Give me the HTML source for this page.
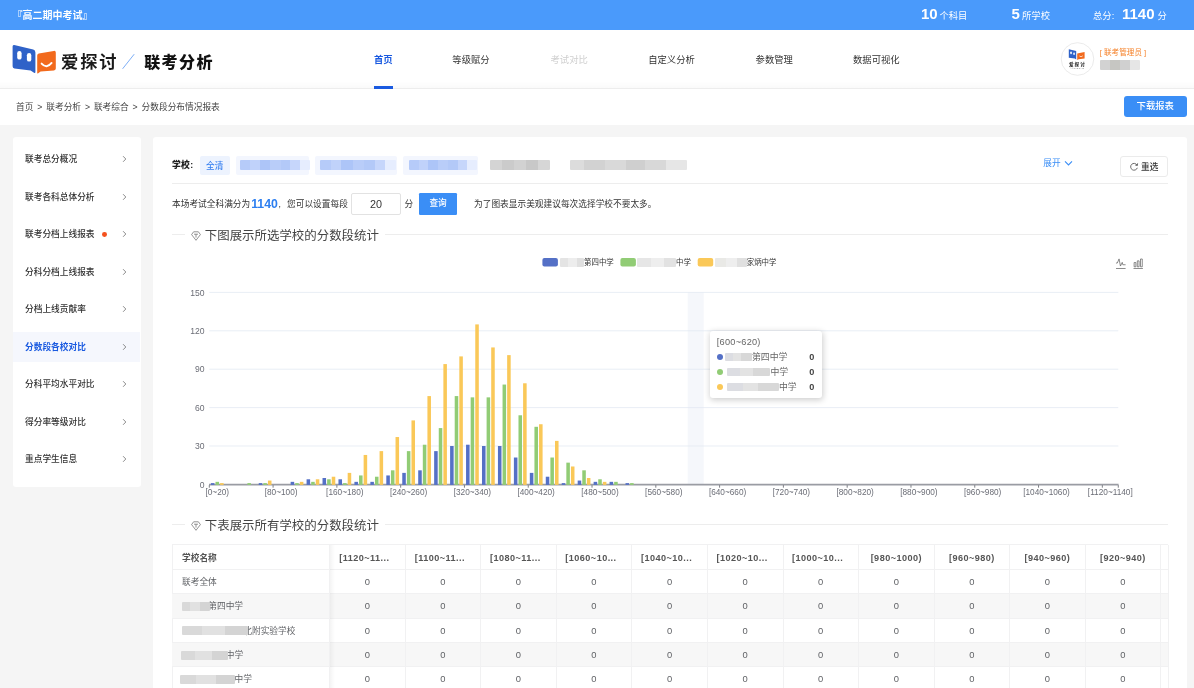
<!DOCTYPE html>
<html lang="zh-CN"><head><meta charset="utf-8"><title>联考分析 - 分数段分布情况报表</title>
<style>
*{box-sizing:border-box;margin:0;padding:0}
html,body{width:1194px;height:688px;overflow:hidden;background:#f5f5f5}
body{position:relative;font-family:"Liberation Sans","Noto Sans CJK SC",sans-serif;font-size:8.7px;color:#333;-webkit-font-smoothing:antialiased}
#root{position:absolute;left:0;top:0;width:1194px;height:688px;overflow:hidden;will-change:transform}
.a{position:absolute;white-space:nowrap}
.topbar{left:0;top:0;width:1194px;height:30px;background:#4a9afb;color:#fff}
.header{left:0;top:30px;width:1194px;height:58.6px;background:#fff;border-bottom:1px solid #ededed}
.crumb{left:0;top:88.5px;width:1194px;height:36.5px;background:#fff}
.card{background:#fff;border-radius:3px}
.nav{font-size:9.33px;line-height:14px;top:52.5px;color:#333}
.mi{left:13px;width:127px;height:30.4px;line-height:30.4px;font-size:8.7px;color:#333;font-weight:500;padding-left:12px}
.mi svg{position:absolute;left:109px;top:11.2px}
.blur{position:absolute;border-radius:1px}
.hl{height:1px;background:#ededed}
.sec{font-size:12.44px;line-height:18px;color:#444}
.yl{font-size:8.6px;line-height:10px;color:#6b6d76;text-align:right;width:30px;left:174.5px}
.xl{font-size:8.25px;line-height:10px;color:#6b6d76;text-align:center;width:60px;top:487.6px}
.th{font-size:9.1px;letter-spacing:.45px;font-weight:bold;color:#555;line-height:24.3px;text-align:center;top:545.6px}
.td{font-size:8.7px;color:#606266;line-height:24.3px;text-align:center}
.td.n{font-size:9.4px}
</style></head>
<body>
<div id="root">
<div class="a topbar">
<div class="a" style="left:12.5px;top:8.2px;font-size:10px;line-height:15px;font-weight:bold">『高二期中考试』</div>
<div class="a" style="left:921px;top:4.2px;font-size:15px;line-height:19px;font-weight:bold">10</div>
<div class="a" style="left:939.4px;top:9px;font-size:9.33px;line-height:14px">个科目</div>
<div class="a" style="left:1011.6px;top:4.2px;font-size:15px;line-height:19px;font-weight:bold">5</div>
<div class="a" style="left:1022px;top:9px;font-size:9.33px;line-height:14px">所学校</div>
<div class="a" style="left:1093px;top:9px;font-size:9.33px;line-height:14px">总分:</div>
<div class="a" style="left:1122px;top:4.2px;font-size:15px;line-height:19px;font-weight:bold">1140</div>
<div class="a" style="left:1157.6px;top:9px;font-size:9.33px;line-height:14px">分</div>
</div>
<div class="a header"></div>
<div class="a" style="left:0;top:81px;width:1194px;height:7px;background:linear-gradient(180deg,rgba(0,0,0,0),rgba(0,0,0,.018))"></div>
<svg class="a" style="left:12px;top:44px" width="46" height="31" viewBox="0 0 46 31">
<path d="M2.2 1.1 L21.2 5.6 Q23.4 6.2 23.4 8.4 L23.4 28 Q23.4 29.6 22 28.8 L18.6 26.6 L2.4 24.4 Q0.6 24.1 0.6 22.2 L0.6 2.6 Q0.6 0.8 2.2 1.1 Z" fill="#2f62c8"/>
<rect x="5.2" y="7" width="4.4" height="8.6" rx="2.2" fill="#fff"/>
<rect x="14.9" y="9" width="4.4" height="8.6" rx="2.2" fill="#fff"/>
<path d="M25.2 11.4 Q25.2 10 26.8 9.6 L41.8 6.9 Q43.8 6.6 43.8 8.6 L43.8 24.6 Q43.8 26.3 42 26.5 L28.6 27.6 L25.9 29.4 Q25.2 29.8 25.2 28.8 Z" fill="#f26a1d"/>
<path d="M29.6 19.6 Q34.6 25.2 39.6 18.9" fill="none" stroke="#fff" stroke-width="1.9" stroke-linecap="round"/>
</svg>
<div class="a" style="left:61px;top:50.4px;font-size:17.3px;line-height:24px;letter-spacing:1.9px;color:#1a1a1a;font-weight:700">爱探讨</div>
<svg class="a" style="left:121px;top:53px" width="15" height="17"><line x1="1.6" y1="15.8" x2="13.2" y2="1.2" stroke="#6ea5f5" stroke-width="0.9"/></svg>
<div class="a" style="left:144.2px;top:50.8px;font-size:16px;line-height:24px;letter-spacing:1.4px;color:#111;font-weight:900">联考分析</div>
<div class="a nav" style="left:374px;color:#1a5ae0;font-weight:700">首页</div>
<div class="a nav" style="left:452.3px;color:#333;font-weight:400">等级赋分</div>
<div class="a nav" style="left:550.5px;color:#cfcfcf;font-weight:400">考试对比</div>
<div class="a nav" style="left:648.2px;color:#333;font-weight:400">自定义分析</div>
<div class="a nav" style="left:755.6px;color:#333;font-weight:400">参数管理</div>
<div class="a nav" style="left:853px;color:#333;font-weight:400">数据可视化</div>
<div class="a" style="left:374px;top:86.4px;width:18.6px;height:2.6px;background:#1a5ae0"></div>
<svg class="a" style="left:1060px;top:42px" width="35" height="35" viewBox="0 0 35 35">
<circle cx="17.5" cy="17" r="16.3" fill="#fff" stroke="#e6e6e6" stroke-width="0.8"/>
<path d="M8.8 7.2 L16.2 9 L16.2 17.4 L14.8 16.6 L8.8 15.8 Z" fill="#2f62c8"/>
<path d="M17.2 11.4 L24.6 10 L24.6 16.6 L18.6 17.2 L17.2 18 Z" fill="#f26a1d"/>
<rect x="10.3" y="9.6" width="1.5" height="2.6" rx=".7" fill="#fff"/><rect x="13.3" y="10.4" width="1.5" height="2.6" rx=".7" fill="#fff"/>
<path d="M19.4 14 Q21 15.6 22.8 13.8" fill="none" stroke="#fff" stroke-width=".7"/>
<text x="17.4" y="24.4" font-size="4.6" font-weight="bold" text-anchor="middle" fill="#222" font-family='"Liberation Sans","Noto Sans CJK SC",sans-serif' letter-spacing="1">爱探讨</text>
<text x="17.4" y="27.3" font-size="2" text-anchor="middle" fill="#555" font-family='"Liberation Sans",sans-serif' letter-spacing=".5">AITANTAO</text>
</svg>
<div class="a" style="left:1099.8px;top:46.8px;font-size:7.6px;line-height:11px;color:#f5822a">[ 联考管理员 ]</div>
<div class="blur" style="left:1099.6px;top:60px;width:40px;height:9.8px;background:linear-gradient(90deg,#d2d2d2 0 25%,#c6c6c2 25% 50%,#d0d0d0 50% 75%,#e6e6e6 75%)"></div>
<div class="a crumb"></div>
<div class="a" style="left:16px;top:99.5px;font-size:8.7px;line-height:14px;color:#444;word-spacing:1.5px">首页 &gt; 联考分析 &gt; 联考综合 &gt; 分数段分布情况报表</div>
<div class="a" style="left:1123.5px;top:95.8px;width:63.5px;height:21px;border-radius:3px;background:#3a8ef6;color:#fff;font-size:9.33px;line-height:21px;text-align:center;font-weight:500">下载报表</div>
<div class="a card" style="left:12.5px;top:137px;width:128px;height:350px"></div>
<div class="a mi" style="top:144.1px;">联考总分概况<svg width="5" height="8" viewBox="0 0 5 8"><path d="M1.1 1.2 L3.8 4 L1.1 6.8" fill="none" stroke="#777" stroke-width="0.85"/></svg></div>
<div class="a mi" style="top:181.6px;">联考各科总体分析<svg width="5" height="8" viewBox="0 0 5 8"><path d="M1.1 1.2 L3.8 4 L1.1 6.8" fill="none" stroke="#777" stroke-width="0.85"/></svg></div>
<div class="a mi" style="top:219.1px;">联考分档上线报表<span style="position:absolute;left:89px;top:12.8px;width:4.8px;height:4.8px;border-radius:50%;background:#f4511e"></span><svg width="5" height="8" viewBox="0 0 5 8"><path d="M1.1 1.2 L3.8 4 L1.1 6.8" fill="none" stroke="#777" stroke-width="0.85"/></svg></div>
<div class="a mi" style="top:256.6px;">分科分档上线报表<svg width="5" height="8" viewBox="0 0 5 8"><path d="M1.1 1.2 L3.8 4 L1.1 6.8" fill="none" stroke="#777" stroke-width="0.85"/></svg></div>
<div class="a mi" style="top:294.1px;">分档上线贡献率<svg width="5" height="8" viewBox="0 0 5 8"><path d="M1.1 1.2 L3.8 4 L1.1 6.8" fill="none" stroke="#777" stroke-width="0.85"/></svg></div>
<div class="a mi" style="top:331.6px;background:#f5f7fd;color:#1a5ae0;font-weight:bold;">分数段各校对比<svg width="5" height="8" viewBox="0 0 5 8"><path d="M1.1 1.2 L3.8 4 L1.1 6.8" fill="none" stroke="#777" stroke-width="0.85"/></svg></div>
<div class="a mi" style="top:369.1px;">分科平均水平对比<svg width="5" height="8" viewBox="0 0 5 8"><path d="M1.1 1.2 L3.8 4 L1.1 6.8" fill="none" stroke="#777" stroke-width="0.85"/></svg></div>
<div class="a mi" style="top:406.6px;">得分率等级对比<svg width="5" height="8" viewBox="0 0 5 8"><path d="M1.1 1.2 L3.8 4 L1.1 6.8" fill="none" stroke="#777" stroke-width="0.85"/></svg></div>
<div class="a mi" style="top:444.1px;">重点学生信息<svg width="5" height="8" viewBox="0 0 5 8"><path d="M1.1 1.2 L3.8 4 L1.1 6.8" fill="none" stroke="#777" stroke-width="0.85"/></svg></div>
<div class="a card" style="left:153px;top:137px;width:1034px;height:560px"></div>
<div class="a" style="left:172px;top:158px;font-size:8.8px;line-height:14px;font-weight:900;color:#222;letter-spacing:.3px">学校:</div>
<div class="a" style="left:200px;top:155.9px;width:29.6px;height:18.8px;border-radius:2px;background:#edf3fe;color:#357ff0;font-size:8.7px;line-height:20.4px;text-align:center;font-weight:500">全清</div>
<div class="a" style="left:235.9px;top:155.9px;width:73.6px;height:18.8px;border-radius:2px;background:#f3f6fe"></div>
<div class="blur" style="left:240px;top:159.8px;width:69.5px;height:10.4px;background:linear-gradient(90deg,#b6cbf9 0 14%,#c0d2fa 14% 28%,#adc5f8 28% 43%,#b9cdf9 43% 58%,#b3c9f8 58% 72%,#c6d6fb 72% 86%,#e6edfe 86%)"></div>
<div class="a" style="left:315px;top:155.9px;width:82.0px;height:18.8px;border-radius:2px;background:#f3f6fe"></div>
<div class="blur" style="left:320.4px;top:159.8px;width:75.6px;height:10.4px;background:linear-gradient(90deg,#b6cbf9 0 14%,#c0d2fa 14% 28%,#adc5f8 28% 43%,#b9cdf9 43% 58%,#b3c9f8 58% 72%,#c6d6fb 72% 86%,#e6edfe 86%)"></div>
<div class="a" style="left:403px;top:155.9px;width:75.0px;height:18.8px;border-radius:2px;background:#f3f6fe"></div>
<div class="blur" style="left:409.4px;top:159.8px;width:67.6px;height:10.4px;background:linear-gradient(90deg,#b6cbf9 0 14%,#c0d2fa 14% 28%,#adc5f8 28% 43%,#b9cdf9 43% 58%,#b3c9f8 58% 72%,#c6d6fb 72% 86%,#e6edfe 86%)"></div>
<div class="blur" style="left:489.6px;top:159.8px;width:60.6px;height:10.4px;background:linear-gradient(90deg,#d4d4d4 0 20%,#cbcbcb 20% 40%,#d2d2d2 40% 60%,#c8c8c8 60% 80%,#d6d6d6 80%)"></div>
<div class="blur" style="left:570.3px;top:159.8px;width:116.6px;height:10.4px;background:linear-gradient(90deg,#dcdcdc 0 12%,#d2d2d2 12% 30%,#d9d9d9 30% 48%,#cfcfcf 48% 64%,#d8d8d8 64% 82%,#e6e6e6 82%)"></div>
<div class="a" style="left:1043.3px;top:156px;font-size:8.7px;line-height:14px;color:#3a8ef6">展开</div>
<svg class="a" style="left:1063.6px;top:160.4px" width="9" height="7" viewBox="0 0 9 7"><path d="M1 1.4 L4.5 4.9 L8 1.4" fill="none" stroke="#3a8ef6" stroke-width="1.1"/></svg>
<div class="a" style="left:1119.5px;top:155.8px;width:48.8px;height:21.2px;border:1px solid #ebebeb;border-radius:3px;background:#fff"></div>
<svg class="a" style="left:1129.2px;top:161.8px" width="10" height="10" viewBox="0 0 10 10"><path d="M8 3.1 A3.4 3.4 0 1 0 8.3 5.8" fill="none" stroke="#555" stroke-width="0.85"/><path d="M8.6 1.3 L8.4 3.5 L6.3 3.2" fill="none" stroke="#555" stroke-width="0.85"/></svg>
<div class="a" style="left:1141px;top:159.5px;font-size:8.7px;line-height:14px;color:#333;font-weight:500">重选</div>
<div class="a hl" style="left:172px;top:182.8px;width:996px"></div>
<div class="a" style="left:172px;top:197px;font-size:8.7px;line-height:14px;color:#333">本场考试全科满分为</div>
<div class="a" style="left:251.2px;top:194.8px;font-size:12.3px;line-height:18px;color:#2d7ff0;font-weight:bold">1140</div>
<div class="a" style="left:278.5px;top:197px;font-size:8.7px;line-height:14px;color:#333">,</div>
<div class="a" style="left:287px;top:197px;font-size:8.7px;line-height:14px;color:#333">您可以设置每段</div>
<div class="a" style="left:351px;top:193.3px;width:49.8px;height:21.4px;border:1px solid #e2e2e2;border-radius:2px;background:#fff;text-align:center;font-size:10.8px;line-height:20.2px;color:#333">20</div>
<div class="a" style="left:404.6px;top:197px;font-size:8.7px;line-height:14px;color:#333">分</div>
<div class="a" style="left:419.4px;top:193.3px;width:37.4px;height:21.4px;border-radius:1.2px;background:#3a8ef6;color:#fff;font-size:8.7px;line-height:21.4px;text-align:center;font-weight:500">查询</div>
<div class="a" style="left:474px;top:197px;font-size:8.7px;line-height:14px;color:#333">为了图表显示美观建议每次选择学校不要太多。</div>
<div class="a hl" style="left:172px;top:234.39999999999998px;width:996px"></div>
<div class="a" style="left:184.5px;top:226.2px;width:200px;height:18px;background:#fff"></div>
<div class="a" style="left:190.8px;top:230.79999999999998px;width:10px;height:10px"><svg width="10" height="10" viewBox="0 0 10 10"><path d="M2.6 0.8 H7.4 L9.4 3.6 L5 9.3 L0.6 3.6 Z" fill="none" stroke="#666" stroke-width="0.7" stroke-linejoin="round"/><path d="M3 3.2 H7 M5 3.2 V6.6" fill="none" stroke="#666" stroke-width="0.7"/></svg></div>
<div class="a sec" style="left:204.8px;top:227.0px">下图展示所选学校的分数段统计</div>
<div class="a hl" style="left:172px;top:524.4000000000001px;width:996px"></div>
<div class="a" style="left:184.5px;top:516.2px;width:200px;height:18px;background:#fff"></div>
<div class="a" style="left:190.8px;top:520.8000000000001px;width:10px;height:10px"><svg width="10" height="10" viewBox="0 0 10 10"><path d="M2.6 0.8 H7.4 L9.4 3.6 L5 9.3 L0.6 3.6 Z" fill="none" stroke="#666" stroke-width="0.7" stroke-linejoin="round"/><path d="M3 3.2 H7 M5 3.2 V6.6" fill="none" stroke="#666" stroke-width="0.7"/></svg></div>
<div class="a sec" style="left:204.8px;top:517.0px">下表展示所有学校的分数段统计</div>
<svg class="a" style="left:0;top:245px" width="1194" height="260" viewBox="0 245 1194 260">
<rect x="687.71" y="292.4" width="15.95" height="192" fill="#d2dbee" fill-opacity="0.22"/>
<line x1="209.3" y1="446.0" x2="1118.3" y2="446.0" stroke="#e0e6f1" stroke-width="0.7"/>
<line x1="209.3" y1="407.6" x2="1118.3" y2="407.6" stroke="#e0e6f1" stroke-width="0.7"/>
<line x1="209.3" y1="369.2" x2="1118.3" y2="369.2" stroke="#e0e6f1" stroke-width="0.7"/>
<line x1="209.3" y1="330.8" x2="1118.3" y2="330.8" stroke="#e0e6f1" stroke-width="0.7"/>
<line x1="209.3" y1="292.4" x2="1118.3" y2="292.4" stroke="#e0e6f1" stroke-width="0.7"/>
<line x1="209.0" y1="484.65" x2="1118.6" y2="484.65" stroke="#9a9ca3" stroke-width="1.6"/>
<rect x="210.89" y="483.12" width="3.54" height="1.78" fill="#5470c6"/>
<rect x="215.50" y="481.84" width="3.54" height="3.06" fill="#91cc75"/>
<rect x="220.11" y="483.12" width="3.54" height="1.78" fill="#fac858"/>
<rect x="247.40" y="483.12" width="3.54" height="1.78" fill="#91cc75"/>
<rect x="258.74" y="483.12" width="3.54" height="1.78" fill="#5470c6"/>
<rect x="263.34" y="483.12" width="3.54" height="1.78" fill="#91cc75"/>
<rect x="267.95" y="480.56" width="3.54" height="4.34" fill="#fac858"/>
<rect x="290.63" y="481.84" width="3.54" height="3.06" fill="#5470c6"/>
<rect x="295.24" y="483.12" width="3.54" height="1.78" fill="#91cc75"/>
<rect x="299.84" y="481.84" width="3.54" height="3.06" fill="#fac858"/>
<rect x="306.58" y="479.28" width="3.54" height="5.62" fill="#5470c6"/>
<rect x="311.18" y="481.84" width="3.54" height="3.06" fill="#91cc75"/>
<rect x="315.79" y="479.28" width="3.54" height="5.62" fill="#fac858"/>
<rect x="322.52" y="478.00" width="3.54" height="6.90" fill="#5470c6"/>
<rect x="327.13" y="479.28" width="3.54" height="5.62" fill="#91cc75"/>
<rect x="331.74" y="476.72" width="3.54" height="8.18" fill="#fac858"/>
<rect x="338.47" y="479.28" width="3.54" height="5.62" fill="#5470c6"/>
<rect x="343.08" y="483.12" width="3.54" height="1.78" fill="#91cc75"/>
<rect x="347.68" y="472.88" width="3.54" height="12.02" fill="#fac858"/>
<rect x="354.42" y="481.84" width="3.54" height="3.06" fill="#5470c6"/>
<rect x="359.02" y="475.44" width="3.54" height="9.46" fill="#91cc75"/>
<rect x="363.63" y="454.96" width="3.54" height="29.94" fill="#fac858"/>
<rect x="370.36" y="481.84" width="3.54" height="3.06" fill="#5470c6"/>
<rect x="374.97" y="476.72" width="3.54" height="8.18" fill="#91cc75"/>
<rect x="379.58" y="451.12" width="3.54" height="33.78" fill="#fac858"/>
<rect x="386.31" y="475.44" width="3.54" height="9.46" fill="#5470c6"/>
<rect x="390.92" y="470.32" width="3.54" height="14.58" fill="#91cc75"/>
<rect x="395.53" y="437.04" width="3.54" height="47.86" fill="#fac858"/>
<rect x="402.26" y="472.88" width="3.54" height="12.02" fill="#5470c6"/>
<rect x="406.87" y="451.12" width="3.54" height="33.78" fill="#91cc75"/>
<rect x="411.47" y="420.40" width="3.54" height="64.50" fill="#fac858"/>
<rect x="418.21" y="470.32" width="3.54" height="14.58" fill="#5470c6"/>
<rect x="422.81" y="444.72" width="3.54" height="40.18" fill="#91cc75"/>
<rect x="427.42" y="396.08" width="3.54" height="88.82" fill="#fac858"/>
<rect x="434.15" y="451.12" width="3.54" height="33.78" fill="#5470c6"/>
<rect x="438.76" y="428.08" width="3.54" height="56.82" fill="#91cc75"/>
<rect x="443.37" y="364.08" width="3.54" height="120.82" fill="#fac858"/>
<rect x="450.10" y="446.00" width="3.54" height="38.90" fill="#5470c6"/>
<rect x="454.71" y="396.08" width="3.54" height="88.82" fill="#91cc75"/>
<rect x="459.31" y="356.40" width="3.54" height="128.50" fill="#fac858"/>
<rect x="466.05" y="444.72" width="3.54" height="40.18" fill="#5470c6"/>
<rect x="470.65" y="397.36" width="3.54" height="87.54" fill="#91cc75"/>
<rect x="475.26" y="324.40" width="3.54" height="160.50" fill="#fac858"/>
<rect x="481.99" y="446.00" width="3.54" height="38.90" fill="#5470c6"/>
<rect x="486.60" y="397.36" width="3.54" height="87.54" fill="#91cc75"/>
<rect x="491.21" y="347.44" width="3.54" height="137.46" fill="#fac858"/>
<rect x="497.94" y="446.00" width="3.54" height="38.90" fill="#5470c6"/>
<rect x="502.55" y="384.56" width="3.54" height="100.34" fill="#91cc75"/>
<rect x="507.15" y="355.12" width="3.54" height="129.78" fill="#fac858"/>
<rect x="513.89" y="457.52" width="3.54" height="27.38" fill="#5470c6"/>
<rect x="518.49" y="415.28" width="3.54" height="69.62" fill="#91cc75"/>
<rect x="523.10" y="383.28" width="3.54" height="101.62" fill="#fac858"/>
<rect x="529.83" y="472.88" width="3.54" height="12.02" fill="#5470c6"/>
<rect x="534.44" y="426.80" width="3.54" height="58.10" fill="#91cc75"/>
<rect x="539.05" y="424.24" width="3.54" height="60.66" fill="#fac858"/>
<rect x="545.78" y="476.72" width="3.54" height="8.18" fill="#5470c6"/>
<rect x="550.39" y="457.52" width="3.54" height="27.38" fill="#91cc75"/>
<rect x="555.00" y="440.88" width="3.54" height="44.02" fill="#fac858"/>
<rect x="561.73" y="483.12" width="3.54" height="1.78" fill="#5470c6"/>
<rect x="566.34" y="462.64" width="3.54" height="22.26" fill="#91cc75"/>
<rect x="570.94" y="466.48" width="3.54" height="18.42" fill="#fac858"/>
<rect x="577.68" y="480.56" width="3.54" height="4.34" fill="#5470c6"/>
<rect x="582.28" y="470.32" width="3.54" height="14.58" fill="#91cc75"/>
<rect x="586.89" y="478.00" width="3.54" height="6.90" fill="#fac858"/>
<rect x="593.62" y="481.84" width="3.54" height="3.06" fill="#5470c6"/>
<rect x="598.23" y="479.28" width="3.54" height="5.62" fill="#91cc75"/>
<rect x="602.84" y="481.84" width="3.54" height="3.06" fill="#fac858"/>
<rect x="609.57" y="481.84" width="3.54" height="3.06" fill="#5470c6"/>
<rect x="614.18" y="481.84" width="3.54" height="3.06" fill="#91cc75"/>
<rect x="625.52" y="483.12" width="3.54" height="1.78" fill="#5470c6"/>
<rect x="630.12" y="483.12" width="3.54" height="1.78" fill="#91cc75"/>
<line x1="209.30" y1="485.2" x2="209.30" y2="487.7" stroke="#5c5e66" stroke-width="0.8"/>
<line x1="273.09" y1="485.2" x2="273.09" y2="487.7" stroke="#5c5e66" stroke-width="0.8"/>
<line x1="336.88" y1="485.2" x2="336.88" y2="487.7" stroke="#5c5e66" stroke-width="0.8"/>
<line x1="400.66" y1="485.2" x2="400.66" y2="487.7" stroke="#5c5e66" stroke-width="0.8"/>
<line x1="464.45" y1="485.2" x2="464.45" y2="487.7" stroke="#5c5e66" stroke-width="0.8"/>
<line x1="528.24" y1="485.2" x2="528.24" y2="487.7" stroke="#5c5e66" stroke-width="0.8"/>
<line x1="592.03" y1="485.2" x2="592.03" y2="487.7" stroke="#5c5e66" stroke-width="0.8"/>
<line x1="655.82" y1="485.2" x2="655.82" y2="487.7" stroke="#5c5e66" stroke-width="0.8"/>
<line x1="719.60" y1="485.2" x2="719.60" y2="487.7" stroke="#5c5e66" stroke-width="0.8"/>
<line x1="783.39" y1="485.2" x2="783.39" y2="487.7" stroke="#5c5e66" stroke-width="0.8"/>
<line x1="847.18" y1="485.2" x2="847.18" y2="487.7" stroke="#5c5e66" stroke-width="0.8"/>
<line x1="910.97" y1="485.2" x2="910.97" y2="487.7" stroke="#5c5e66" stroke-width="0.8"/>
<line x1="974.76" y1="485.2" x2="974.76" y2="487.7" stroke="#5c5e66" stroke-width="0.8"/>
<line x1="1038.54" y1="485.2" x2="1038.54" y2="487.7" stroke="#5c5e66" stroke-width="0.8"/>
<line x1="1102.33" y1="485.2" x2="1102.33" y2="487.7" stroke="#5c5e66" stroke-width="0.8"/>
<line x1="1118.28" y1="485.2" x2="1118.28" y2="487.7" stroke="#5c5e66" stroke-width="0.8"/>
<rect x="542.4" y="258" width="15.5" height="8.5" rx="2" fill="#5470c6"/>
<rect x="620.4" y="258" width="15.5" height="8.5" rx="2" fill="#91cc75"/>
<rect x="697.7" y="258" width="15.5" height="8.5" rx="2" fill="#fac858"/>
<g fill="none" stroke="#666" stroke-width="0.75">
<path vector-effect="non-scaling-stroke" transform="translate(1115.23 257.6) scale(0.1868 0.1879)" d="M4.1,28.9h7.1l9.3-22l7.4,38l9.7-19.7l3,12.8h14.9M4.1,58h51.4"/>
<path vector-effect="non-scaling-stroke" transform="translate(1132.96 258.66) scale(0.175 0.1696)" d="M6.7,22.9h10V48h-10V22.9zM24.9,13h10v35h-10V13zM43.2,2h10v46h-10V2zM3.1,58h53.7"/>
</g>
</svg>
<div class="blur" style="left:560px;top:257.6px;width:24px;height:9px;background:linear-gradient(90deg,#e4e4e4 0 35%,#ededed 35% 70%,#e0e0e0 70%)"></div>
<div class="a" style="left:584px;top:256.6px;font-size:7.46px;line-height:11px;color:#333">第四中学</div>
<div class="blur" style="left:636.5px;top:257.6px;width:39px;height:9px;background:linear-gradient(90deg,#e6e6e6 0 35%,#eeeeee 35% 70%,#e2e2e2 70%)"></div>
<div class="a" style="left:676px;top:256.6px;font-size:7.46px;line-height:11px;color:#333">中学</div>
<div class="blur" style="left:715px;top:257.6px;width:31.7px;height:9px;background:linear-gradient(90deg,#e9e9e6 0 35%,#eeeeee 35% 70%,#e0e0e0 70%)"></div>
<div class="a" style="left:746.7px;top:256.6px;font-size:7.46px;line-height:11px;color:#333">家炳中学</div>
<div class="a yl" style="top:479.6px">0</div>
<div class="a yl" style="top:441.2px">30</div>
<div class="a yl" style="top:402.8px">60</div>
<div class="a yl" style="top:364.4px">90</div>
<div class="a yl" style="top:326.0px">120</div>
<div class="a yl" style="top:287.6px">150</div>
<div class="a xl" style="left:187.3px">[0~20)</div>
<div class="a xl" style="left:251.1px">[80~100)</div>
<div class="a xl" style="left:314.8px">[160~180)</div>
<div class="a xl" style="left:378.6px">[240~260)</div>
<div class="a xl" style="left:442.4px">[320~340)</div>
<div class="a xl" style="left:506.2px">[400~420)</div>
<div class="a xl" style="left:570.0px">[480~500)</div>
<div class="a xl" style="left:633.8px">[560~580)</div>
<div class="a xl" style="left:697.6px">[640~660)</div>
<div class="a xl" style="left:761.4px">[720~740)</div>
<div class="a xl" style="left:825.2px">[800~820)</div>
<div class="a xl" style="left:888.9px">[880~900)</div>
<div class="a xl" style="left:952.7px">[960~980)</div>
<div class="a xl" style="left:1016.5px">[1040~1060)</div>
<div class="a xl" style="left:1080.3px">[1120~1140]</div>
<div class="a" style="left:710px;top:331px;width:112px;height:67.4px;background:#fff;border-radius:3px;box-shadow:0.6px 1.2px 6px rgba(0,0,0,.2)"></div>
<div class="a" style="left:716.8px;top:335px;font-size:9.2px;letter-spacing:0.25px;line-height:14px;color:#666">[600~620)</div>
<div class="a" style="left:716.6px;top:353.9px;width:6px;height:6px;border-radius:50%;background:#5470c6"></div>
<div class="blur" style="left:725px;top:352.5px;width:27.0px;height:8.8px;background:linear-gradient(90deg,#dcdde2 0 30%,#e3e3e3 30% 60%,#d8d8d8 60%)"></div>
<div class="a" style="left:752px;top:349.9px;font-size:8.9px;line-height:14px;color:#666">第四中学</div>
<div class="a" style="left:794px;top:349.9px;width:20.4px;text-align:right;font-size:9.2px;line-height:14px;color:#464646;font-weight:bold">0</div>
<div class="a" style="left:716.6px;top:369px;width:6px;height:6px;border-radius:50%;background:#91cc75"></div>
<div class="blur" style="left:727px;top:367.6px;width:43.4px;height:8.8px;background:linear-gradient(90deg,#dcdde2 0 30%,#e3e3e3 30% 60%,#d8d8d8 60%)"></div>
<div class="a" style="left:770.4px;top:365px;font-size:8.9px;line-height:14px;color:#666">中学</div>
<div class="a" style="left:794px;top:365px;width:20.4px;text-align:right;font-size:9.2px;line-height:14px;color:#464646;font-weight:bold">0</div>
<div class="a" style="left:716.6px;top:384px;width:6px;height:6px;border-radius:50%;background:#fac858"></div>
<div class="blur" style="left:727px;top:382.6px;width:52.0px;height:8.8px;background:linear-gradient(90deg,#dcdde2 0 30%,#e3e3e3 30% 60%,#d8d8d8 60%)"></div>
<div class="a" style="left:779px;top:380px;font-size:8.9px;line-height:14px;color:#666">中学</div>
<div class="a" style="left:794px;top:380px;width:20.4px;text-align:right;font-size:9.2px;line-height:14px;color:#464646;font-weight:bold">0</div>
<div class="a" style="left:172px;top:544.4px;width:996px;height:150px;background:#fff;border:1px solid #f1f1f2;border-right:none"></div>
<div class="a" style="left:172px;top:593.6px;width:996px;height:24.36px;background:#f7f7f7"></div>
<div class="a" style="left:172px;top:642.3px;width:996px;height:24.36px;background:#f7f7f7"></div>
<div class="a" style="left:172px;top:568.9px;width:996px;height:0.8px;background:#f1f1f2"></div>
<div class="a" style="left:172px;top:593.2px;width:996px;height:0.8px;background:#f1f1f2"></div>
<div class="a" style="left:172px;top:617.6px;width:996px;height:0.8px;background:#f1f1f2"></div>
<div class="a" style="left:172px;top:641.9px;width:996px;height:0.8px;background:#f1f1f2"></div>
<div class="a" style="left:172px;top:666.3px;width:996px;height:0.8px;background:#f1f1f2"></div>
<div class="a" style="left:329.1px;top:544.9px;width:0.8px;height:150px;background:#f1f1f2"></div>
<div class="a" style="left:404.7px;top:544.9px;width:0.8px;height:150px;background:#f1f1f2"></div>
<div class="a" style="left:480.2px;top:544.9px;width:0.8px;height:150px;background:#f1f1f2"></div>
<div class="a" style="left:555.8px;top:544.9px;width:0.8px;height:150px;background:#f1f1f2"></div>
<div class="a" style="left:631.4px;top:544.9px;width:0.8px;height:150px;background:#f1f1f2"></div>
<div class="a" style="left:706.9px;top:544.9px;width:0.8px;height:150px;background:#f1f1f2"></div>
<div class="a" style="left:782.5px;top:544.9px;width:0.8px;height:150px;background:#f1f1f2"></div>
<div class="a" style="left:858.1px;top:544.9px;width:0.8px;height:150px;background:#f1f1f2"></div>
<div class="a" style="left:933.7px;top:544.9px;width:0.8px;height:150px;background:#f1f1f2"></div>
<div class="a" style="left:1009.2px;top:544.9px;width:0.8px;height:150px;background:#f1f1f2"></div>
<div class="a" style="left:1084.8px;top:544.9px;width:0.8px;height:150px;background:#f1f1f2"></div>
<div class="a" style="left:1160.4px;top:544.9px;width:0.8px;height:150px;background:#f1f1f2"></div>
<div class="a" style="left:1167.6px;top:544.9px;width:0.8px;height:150px;background:#f1f1f2"></div>
<div class="a" style="left:329.5px;top:544.9px;width:5px;height:150px;background:linear-gradient(90deg,rgba(0,0,0,.045),rgba(0,0,0,0))"></div>
<div class="a th" style="left:182px;text-align:left;font-size:8.7px;letter-spacing:0">学校名称</div>
<div class="a th" style="left:326.5px;width:75.57px">[1120~11...</div>
<div class="a th" style="left:402.1px;width:75.57px">[1100~11...</div>
<div class="a th" style="left:477.6px;width:75.57px">[1080~11...</div>
<div class="a th" style="left:553.2px;width:75.57px">[1060~10...</div>
<div class="a th" style="left:628.8px;width:75.57px">[1040~10...</div>
<div class="a th" style="left:704.3px;width:75.57px">[1020~10...</div>
<div class="a th" style="left:779.9px;width:75.57px">[1000~10...</div>
<div class="a th" style="left:858.5px;width:75.57px">[980~1000)</div>
<div class="a th" style="left:934.1px;width:75.57px">[960~980)</div>
<div class="a th" style="left:1009.6px;width:75.57px">[940~960)</div>
<div class="a th" style="left:1085.2px;width:75.57px">[920~940)</div>
<div class="a td" style="left:182px;top:570.0px;text-align:left">联考全体</div>
<div class="a td n" style="left:329.5px;width:75.57px;top:570.0px">0</div>
<div class="a td n" style="left:405.1px;width:75.57px;top:570.0px">0</div>
<div class="a td n" style="left:480.6px;width:75.57px;top:570.0px">0</div>
<div class="a td n" style="left:556.2px;width:75.57px;top:570.0px">0</div>
<div class="a td n" style="left:631.8px;width:75.57px;top:570.0px">0</div>
<div class="a td n" style="left:707.3px;width:75.57px;top:570.0px">0</div>
<div class="a td n" style="left:782.9px;width:75.57px;top:570.0px">0</div>
<div class="a td n" style="left:858.5px;width:75.57px;top:570.0px">0</div>
<div class="a td n" style="left:934.1px;width:75.57px;top:570.0px">0</div>
<div class="a td n" style="left:1009.6px;width:75.57px;top:570.0px">0</div>
<div class="a td n" style="left:1085.2px;width:75.57px;top:570.0px">0</div>
<div class="a td" style="left:208.3px;top:594.3px;text-align:left">第四中学</div>
<div class="blur" style="left:182px;top:601.9px;width:27.5px;height:9px;background:linear-gradient(90deg,#d9d9d9 0 30%,#e1e1e1 30% 65%,#d4d4d4 65%)"></div>
<div class="a td n" style="left:329.5px;width:75.57px;top:594.3px">0</div>
<div class="a td n" style="left:405.1px;width:75.57px;top:594.3px">0</div>
<div class="a td n" style="left:480.6px;width:75.57px;top:594.3px">0</div>
<div class="a td n" style="left:556.2px;width:75.57px;top:594.3px">0</div>
<div class="a td n" style="left:631.8px;width:75.57px;top:594.3px">0</div>
<div class="a td n" style="left:707.3px;width:75.57px;top:594.3px">0</div>
<div class="a td n" style="left:782.9px;width:75.57px;top:594.3px">0</div>
<div class="a td n" style="left:858.5px;width:75.57px;top:594.3px">0</div>
<div class="a td n" style="left:934.1px;width:75.57px;top:594.3px">0</div>
<div class="a td n" style="left:1009.6px;width:75.57px;top:594.3px">0</div>
<div class="a td n" style="left:1085.2px;width:75.57px;top:594.3px">0</div>
<div class="a td" style="left:243.3px;top:618.7px;text-align:left">北附实验学校</div>
<div class="blur" style="left:182px;top:626.3px;width:65.6px;height:9px;background:linear-gradient(90deg,#d9d9d9 0 30%,#e1e1e1 30% 65%,#d4d4d4 65%)"></div>
<div class="a td n" style="left:329.5px;width:75.57px;top:618.7px">0</div>
<div class="a td n" style="left:405.1px;width:75.57px;top:618.7px">0</div>
<div class="a td n" style="left:480.6px;width:75.57px;top:618.7px">0</div>
<div class="a td n" style="left:556.2px;width:75.57px;top:618.7px">0</div>
<div class="a td n" style="left:631.8px;width:75.57px;top:618.7px">0</div>
<div class="a td n" style="left:707.3px;width:75.57px;top:618.7px">0</div>
<div class="a td n" style="left:782.9px;width:75.57px;top:618.7px">0</div>
<div class="a td n" style="left:858.5px;width:75.57px;top:618.7px">0</div>
<div class="a td n" style="left:934.1px;width:75.57px;top:618.7px">0</div>
<div class="a td n" style="left:1009.6px;width:75.57px;top:618.7px">0</div>
<div class="a td n" style="left:1085.2px;width:75.57px;top:618.7px">0</div>
<div class="a td" style="left:225.7px;top:643.0px;text-align:left">中学</div>
<div class="blur" style="left:181px;top:650.6px;width:47.2px;height:9px;background:linear-gradient(90deg,#d9d9d9 0 30%,#e1e1e1 30% 65%,#d4d4d4 65%)"></div>
<div class="a td n" style="left:329.5px;width:75.57px;top:643.0px">0</div>
<div class="a td n" style="left:405.1px;width:75.57px;top:643.0px">0</div>
<div class="a td n" style="left:480.6px;width:75.57px;top:643.0px">0</div>
<div class="a td n" style="left:556.2px;width:75.57px;top:643.0px">0</div>
<div class="a td n" style="left:631.8px;width:75.57px;top:643.0px">0</div>
<div class="a td n" style="left:707.3px;width:75.57px;top:643.0px">0</div>
<div class="a td n" style="left:782.9px;width:75.57px;top:643.0px">0</div>
<div class="a td n" style="left:858.5px;width:75.57px;top:643.0px">0</div>
<div class="a td n" style="left:934.1px;width:75.57px;top:643.0px">0</div>
<div class="a td n" style="left:1009.6px;width:75.57px;top:643.0px">0</div>
<div class="a td n" style="left:1085.2px;width:75.57px;top:643.0px">0</div>
<div class="a td" style="left:234.5px;top:667.4px;text-align:left">中学</div>
<div class="blur" style="left:180px;top:675.0px;width:55.0px;height:9px;background:linear-gradient(90deg,#d9d9d9 0 30%,#e1e1e1 30% 65%,#d4d4d4 65%)"></div>
<div class="a td n" style="left:329.5px;width:75.57px;top:667.4px">0</div>
<div class="a td n" style="left:405.1px;width:75.57px;top:667.4px">0</div>
<div class="a td n" style="left:480.6px;width:75.57px;top:667.4px">0</div>
<div class="a td n" style="left:556.2px;width:75.57px;top:667.4px">0</div>
<div class="a td n" style="left:631.8px;width:75.57px;top:667.4px">0</div>
<div class="a td n" style="left:707.3px;width:75.57px;top:667.4px">0</div>
<div class="a td n" style="left:782.9px;width:75.57px;top:667.4px">0</div>
<div class="a td n" style="left:858.5px;width:75.57px;top:667.4px">0</div>
<div class="a td n" style="left:934.1px;width:75.57px;top:667.4px">0</div>
<div class="a td n" style="left:1009.6px;width:75.57px;top:667.4px">0</div>
<div class="a td n" style="left:1085.2px;width:75.57px;top:667.4px">0</div>
</div>
</body></html>
